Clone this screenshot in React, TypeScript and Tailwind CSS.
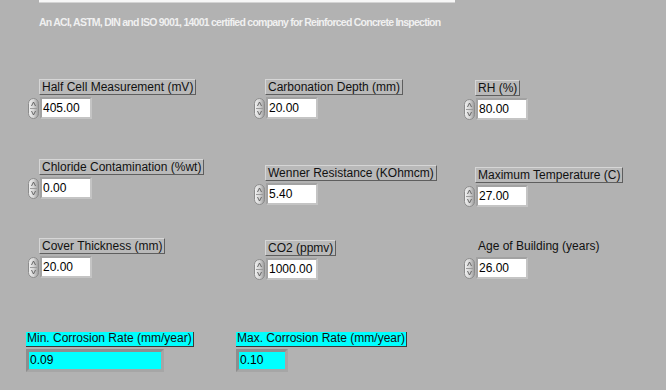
import React from 'react';

const FONT = { fontFamily: '"Liberation Sans", Arial, sans-serif' };

function Spinner() {
  return (
    <svg width="11" height="21" viewBox="0 0 11 21" className="shrink-0">
      <defs>
        <linearGradient id="spin" x1="0" y1="0" x2="1" y2="0">
          <stop offset="0" stopColor="#f2f2f2" />
          <stop offset="0.5" stopColor="#d6d6d6" />
          <stop offset="1" stopColor="#9a9a9a" />
        </linearGradient>
      </defs>
      <rect x="0.5" y="0.5" width="10" height="20" rx="5" fill="url(#spin)" stroke="#8c8c8c" />
      <line x1="2" y1="10.5" x2="9" y2="10.5" stroke="#9c9c9c" />
      {/* up / down arrows */}
      <polyline points="3.5,8 5.5,4 7.5,8" fill="none" stroke="#5a5a5a" strokeWidth="0.9" />
      <polyline points="3.5,13 5.5,17 7.5,13" fill="none" stroke="#5a5a5a" strokeWidth="0.9" />
    </svg>
  );
}

type ControlProps = {
  label: string;
  value: string;
  boxed?: boolean;
};

function NumericControl({ label, value, boxed = true }: ControlProps) {
  return (
    <div className="flex flex-col items-start">
      <div className="pl-[11px]">
        <div
          className={
            boxed
              ? 'h-[16px] px-[2px] bg-[#b9b9b9] border-t border-l border-[#d6d6d6] border-r border-b border-r-[#5e5e5e] border-b-[#5e5e5e] text-[12px] leading-[14px] text-[#111] whitespace-nowrap'
              : 'h-[16px] px-[3px] text-[12px] leading-[14px] text-[#111] whitespace-nowrap'
          }
        >
          {label}
        </div>
      </div>
      <div className="flex items-center mt-[2px]">
        <Spinner />
        <div className="ml-[1px] w-[52px] h-[22px] border-2 border-t-[#a2a2a2] border-l-[#a2a2a2] border-r-[#c4c4c4] border-b-[#c4c4c4]">
          <div className="h-full bg-white text-[12px] leading-[18px] text-black pl-[1px]">{value}</div>
        </div>
      </div>
    </div>
  );
}

function Indicator({ label, value, width }: { label: string; value: string; width: string }) {
  return (
    <div className="flex flex-col items-start">
      <div className="h-[15px] px-[1px] bg-[#00ffff] border-r border-b border-[#3a3a3a] text-[12px] leading-[13px] text-[#111] whitespace-nowrap">
        {label}
      </div>
      <div className={`mt-[2px] h-[23px] ${width} border-[3px] border-t-[#8e8e8e] border-l-[#8e8e8e] border-r-[#a6a6a6] border-b-[#a6a6a6]`}>
        <div className="h-full bg-[#00ffff] text-[12px] leading-[17px] text-black pl-[1px]">{value}</div>
      </div>
    </div>
  );
}

export default function App() {
  return (
    <div className="w-[666px] h-[390px] bg-[#b2b2b2] overflow-hidden" style={FONT}>
      {/* bottom edge of the banner box */}
      <div className="ml-[39px] w-[416px] h-[3px] bg-[#f7f7f7] border-b border-[#d4d4d4]" />

      <div className="ml-[39px] mt-[13px] text-[10.5px] leading-[12px] font-bold text-[#f0f0f0] tracking-[-0.75px] whitespace-nowrap">
        An ACI, ASTM, DIN and ISO 9001, 14001 certified company for Reinforced Concrete Inspection
      </div>

      {/* row 1 */}
      <div className="flex items-start pl-[28px] mt-[51px]">
        <div className="w-[226px]">
          <NumericControl label="Half Cell Measurement (mV)" value="405.00" />
        </div>
        <div className="w-[210px]">
          <NumericControl label="Carbonation Depth (mm)" value="20.00" />
        </div>
        <div className="mt-[1px]">
          <NumericControl label="RH (%)" value="80.00" />
        </div>
      </div>

      {/* row 2 */}
      <div className="flex items-start pl-[28px] mt-[39px]">
        <div className="w-[226px]">
          <NumericControl label="Chloride Contamination (%wt)" value="0.00" />
        </div>
        <div className="w-[210px] mt-[6px]">
          <NumericControl label="Wenner Resistance (KOhmcm)" value="5.40" />
        </div>
        <div className="mt-[8px]">
          <NumericControl label="Maximum Temperature (C)" value="27.00" />
        </div>
      </div>

      {/* row 3 */}
      <div className="flex items-start pl-[28px] mt-[31px]">
        <div className="w-[226px]">
          <NumericControl label="Cover Thickness (mm)" value="20.00" />
        </div>
        <div className="w-[210px] mt-[2px]">
          <NumericControl label="CO2 (ppmv)" value="1000.00" />
        </div>
        <div className="mt-[1px]">
          <NumericControl label="Age of Building (years)" value="26.00" boxed={false} />
        </div>
      </div>

      {/* outputs */}
      <div className="flex items-start pl-[26px] mt-[52px]">
        <div className="w-[210px]">
          <Indicator label="Min. Corrosion Rate (mm/year)" value="0.09" width="w-[138px]" />
        </div>
        <Indicator label="Max. Corrosion Rate (mm/year)" value="0.10" width="w-[52px]" />
      </div>
    </div>
  );
}
